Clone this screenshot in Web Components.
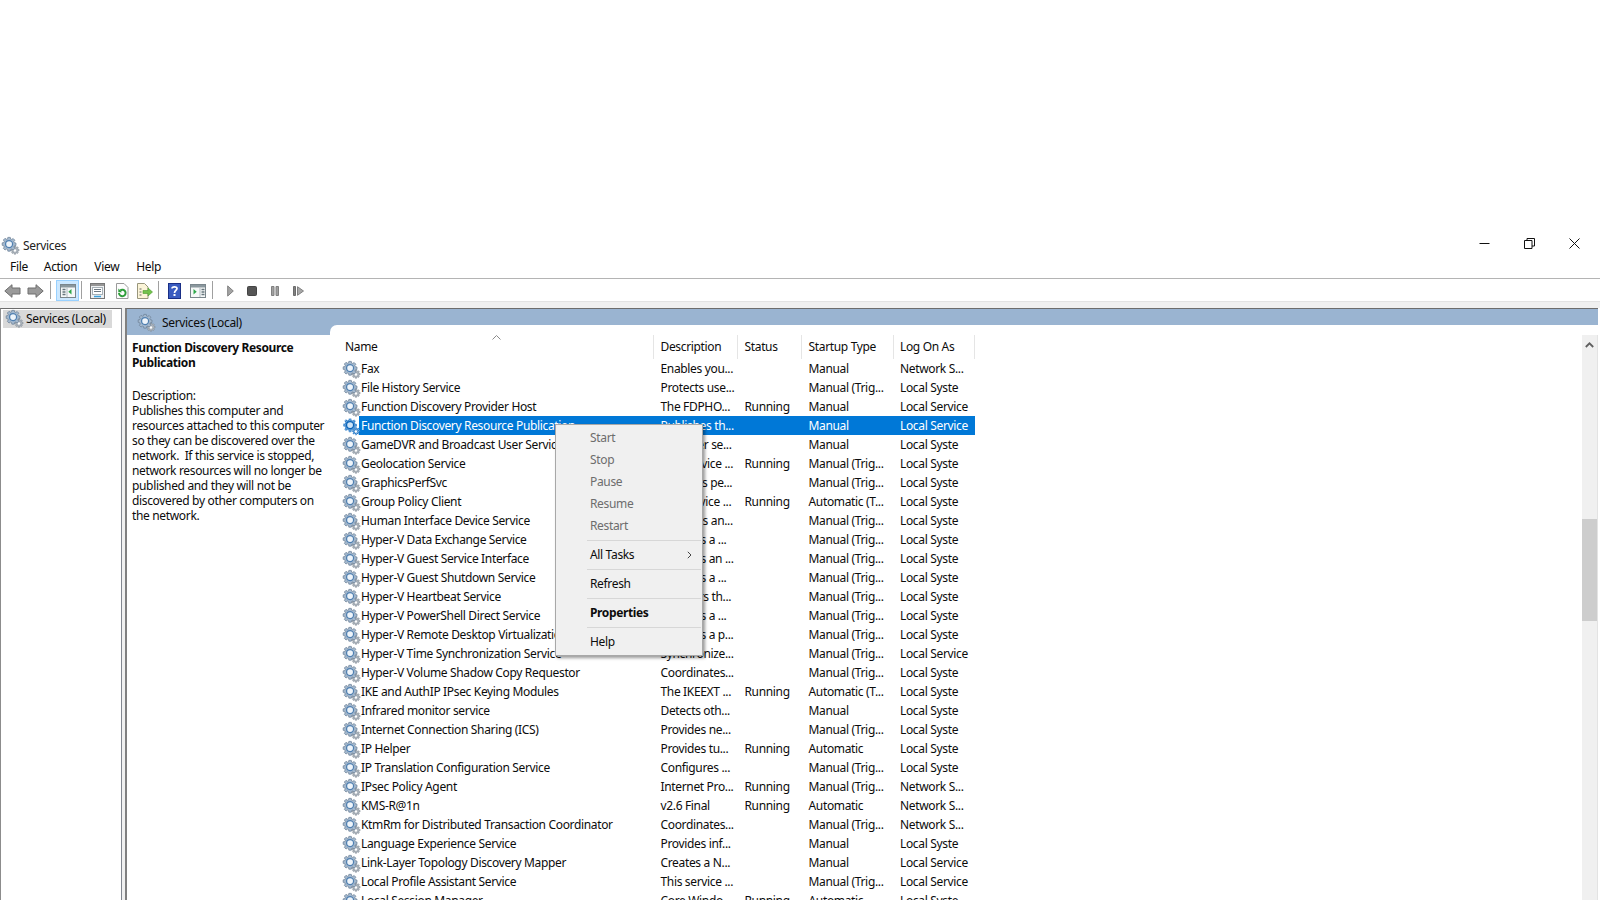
<!DOCTYPE html>
<html><head><meta charset="utf-8">
<style>
html,body{margin:0;padding:0;height:900px;overflow:hidden;background:#fff}
body{font:12px/15px "Noto Sans",sans-serif;color:#0c0c0c;letter-spacing:-.34px}
</style></head><body>
<svc-app></svc-app>
<script>
const GEAR=(sel)=>`<svg viewBox="0 0 18 18" width="17" height="17" aria-hidden="true">
<defs><pattern id="d" width="2" height="2" patternUnits="userSpaceOnUse"><rect width="2" height="2" fill="#0a63b8"/><rect width="1" height="1" fill="#9cc6ec"/><rect x="1" y="1" width="1" height="1" fill="#9cc6ec"/></pattern></defs>
<path d="M13 9.500h1.400l.2 1.100.8.300 1-.6.900.9-.6 1 .3.800 1.100.2v1.400l-1.100.2-.3.800.6 1-.9.900-1-.6-.8.300-.2 1.100H13l-.2-1.100-.8-.3-1 .600-.9-.9.600-1-.3-.8-1.100-.2v-1.400l1.100-.2.300-.8-.6-1 .9-.9 1 .6.800-.3z" fill="${sel?'url(#d)':'#aab2ba'}" stroke="${sel?'none':'#7a8590'}" stroke-width=".5"/>
<circle cx="13.700" cy="14.200" r="1.300" fill="#fff"/>
<path d="M6.200.4h2.600l.3 1.700 1.300.5 1.400-1 1.800 1.800-1 1.400.5 1.300 1.700.3v2.600l-1.700.3-.5 1.300 1 1.400-1.800 1.800-1.400-1-1.300.5-.3 1.700H6.200l-.3-1.700-1.300-.5-1.400 1-1.800-1.800 1-1.400-.5-1.300L.2 8.800V6.200l1.700-.3.500-1.300-1-1.400 1.800-1.800 1.400 1 1.300-.5z" fill="${sel?'url(#d)':'#a3b8ce'}" stroke="${sel?'none':'#6e8298'}" stroke-width=".8"/>
<circle cx="7.500" cy="7.500" r="3.700" fill="${sel?'#cfe4f7':'#eef4fa'}" stroke="${sel?'#0a63b8':'#4f7fb0'}" stroke-width="1.300"/>
</svg>`;
customElements.define('svc-gear',class extends HTMLElement{connectedCallback(){if(this.shadowRoot)return;const s=this.attachShadow({mode:'open'});s.innerHTML=`<style>:host{display:inline-flex;width:16px;height:16px;flex:none;position:relative;z-index:1}svg{display:block;overflow:visible;flex:none}</style>${GEAR(this.hasAttribute('sel'))}`}});

customElements.define('svc-titlebar',class extends HTMLElement{constructor(){super();this.attachShadow({mode:'open'}).innerHTML=`<style>
:host{display:flex;align-items:center;height:21px;padding:0 3px 1px 2px;box-sizing:border-box}
.t{margin-left:5px;color:#222}
.caps{margin-left:auto;display:flex;align-self:flex-start}
.c{width:45px;height:16px;display:flex;align-items:center;justify-content:center}
svg{display:block}
</style><svc-gear></svc-gear><span class="t">Services</span><span class="caps">
<span class="c"><svg width="11" height="11" viewBox="0 0 11 11"><path d="M.5 5.500h10" stroke="#111" fill="none"/></svg></span>
<span class="c"><svg width="11" height="11" viewBox="0 0 11 11"><path d="M.5 2.500h7.500v8H.5zM3 2.500V.5h7.500v7.500H8" stroke="#111" fill="none"/></svg></span>
<span class="c"><svg width="11" height="11" viewBox="0 0 11 11"><path d="M.5.5l10 10M10.500.5l-10 10" stroke="#111" fill="none"/></svg></span>
</span>`}});

customElements.define('svc-menubar',class extends HTMLElement{constructor(){super();this.attachShadow({mode:'open'}).innerHTML=`<style>
:host{display:flex;height:23px;align-items:center;border-bottom:1px solid #b4b4b4;padding:0 0 2px 10px;gap:15px;box-sizing:border-box;color:#0c0c0c}
</style><span>File</span><span style="margin-left:1px">Action</span><span style="margin-left:2px">View</span><span style="margin-left:2px">Help</span>`}});

const I={
back:`<svg width="17" height="14" viewBox="0 0 17 14"><path d="M8 .7L.8 7 8 13.300V10h8V4H8z" fill="#9a9a9a" stroke="#6e6e6e"/></svg>`,
fwd:`<svg width="17" height="14" viewBox="0 0 17 14"><path d="M9 .7L16.200 7 9 13.300V10H1V4h8z" fill="#9a9a9a" stroke="#6e6e6e"/></svg>`,
tree:`<svg width="16" height="14" viewBox="0 0 16 14"><rect x=".5" y=".5" width="15" height="13" fill="#f6f8f8" stroke="#7a868c"/><path d="M1 1h14v2.500H1z" fill="#8a979d"/><path d="M2.500 5.500h3M2.500 8h3M2.500 10.500h3" stroke="#66757c" stroke-width="1.300"/><path d="M7 4v9" stroke="#b0bcc2"/><path d="M11.500 5v5.500L8.300 7.800z" fill="#2fa84a"/></svg>`,
doc:`<svg width="15" height="16" viewBox="0 0 15 16"><rect x=".5" y=".5" width="14" height="15" fill="#eef0f2" stroke="#777"/><path d="M1 1h13v2H1z" fill="#969696"/><rect x="2.500" y="4.500" width="10" height="7" fill="#fff" stroke="#a6b0b6"/><path d="M4 6.500h7M4 8.500h7" stroke="#6a7680"/><path d="M4 13.500h7" stroke="#39a0dc" stroke-width="1.500"/></svg>`,
refresh:`<svg width="14" height="16" viewBox="0 0 14 16"><path d="M1.500.5h7.500l4 4v11H1.500z" fill="#fdfdfd" stroke="#9a9a9a"/><path d="M4 10a3.300 3.300 0 1 0 1.200-2.600" fill="none" stroke="#2e9e3a" stroke-width="2"/><path d="M3.300 5.500v3.800h3.800z" fill="#2e9e3a"/></svg>`,
export:`<svg width="17" height="16" viewBox="0 0 17 16"><path d="M1.500.5h7l3.500 3.500v11.500H1.500z" fill="#fbf4d8" stroke="#99967c"/><path d="M3.500 6h2M3.500 9h2M3.500 12h2" stroke="#666" stroke-width="1.200"/><path d="M7 7.500h5V5l4.500 4-4.500 4v-2.500H7z" fill="#72c24c" stroke="#4c9a2e" stroke-width=".6"/></svg>`,
help:`<svg width="13" height="16" viewBox="0 0 13 16"><rect width="13" height="16" fill="#3a5cc0"/><rect x=".5" y=".5" width="12" height="15" fill="none" stroke="#1a2f86"/><path d="M4 5.500C4 3.500 9 3 9 5.500c0 2-2.500 2-2.500 4.500" fill="none" stroke="#fff" stroke-width="1.700"/><rect x="5.500" y="11" width="2" height="2" fill="#fff"/></svg>`,
props:`<svg width="16" height="14" viewBox="0 0 16 14"><rect x=".5" y=".5" width="15" height="13" fill="#f6f8f8" stroke="#7a868c"/><path d="M1 1h14v2.500H1z" fill="#8a979d"/><path d="M10 4v9" stroke="#b0bcc2"/><path d="M11.500 5.500h3M11.500 8h3M11.500 10.500h3" stroke="#66757c" stroke-width="1.300"/><path d="M3.500 5v5.500l3.200-2.700z" fill="#2fa84a"/></svg>`,
play:`<svg width="7" height="12" viewBox="0 0 7 12"><path d="M.7.900v10.200L6.300 6z" fill="#a4a4a4" stroke="#808080"/></svg>`,
stop:`<svg width="10" height="10" viewBox="0 0 10 10"><rect x=".5" y=".5" width="9" height="9" rx="1" fill="#555" stroke="#444"/></svg>`,
pause:`<svg width="8" height="10" viewBox="0 0 8 10"><path d="M.5.500h2.500v9H.5zM5 .500h2.500v9H5z" fill="#a0a0a0" stroke="#808080"/></svg>`,
resume:`<svg width="11" height="10" viewBox="0 0 11 10"><path d="M.5.500h2v9h-2z" fill="#808080" stroke="#6c6c6c"/><path d="M4.500.7v8.600L10.500 5z" fill="#a8a8a8" stroke="#808080"/></svg>`};
customElements.define('svc-toolbar',class extends HTMLElement{constructor(){super();
const b=(k,w,x='')=>`<span class="b ${x}" style="width:${w}px">${I[k]}</span>`;const sep=(l,r)=>`<span class="s" style="margin:0 ${r}px 0 ${l}px"></span>`;
this.attachShadow({mode:'open'}).innerHTML=`<style>
:host{display:flex;align-items:flex-end;height:22px;padding-left:3px}
.b{display:flex;align-items:center;justify-content:center;height:22px;padding-top:2px;box-sizing:border-box;flex:none}
.on{background:#cce8ff;border:1px solid #99d1ff;height:21px;padding-top:1px}
.s{width:1px;height:18px;background:#a0a0a0;flex:none;align-self:center}
svg{display:block}
</style>${b('back',19)}<span style="width:3px"></span>${b('fwd',20)}${sep(5,5)}${b('tree',23,'on')}${sep(2,3)}${b('doc',25)}${b('refresh',23)}${b('export',22)}${sep(3,4)}${b('help',23)}${b('props',24)}${sep(2,6)}${b('play',22)}${b('stop',22)}${b('pause',24)}${b('resume',23)}`}});

customElements.define('svc-tree',class extends HTMLElement{constructor(){super();this.attachShadow({mode:'open'}).innerHTML=`<style>
:host{display:block;width:122px;box-sizing:border-box;background:#fff;border:1px solid #828790;border-width:1px 1px 0 1px;border-top-color:#6d6d6d;border-left-color:#8c8c8c;padding:1px 9px 0 2px;flex:none}
.i{display:flex;align-items:center;background:#d9d9d9;height:18px;gap:4px;padding:0 0 2px 3px;box-sizing:border-box;white-space:nowrap}
</style><div class="i"><svc-gear></svc-gear><span>Services (Local)</span></div>`}});

customElements.define('svc-details',class extends HTMLElement{constructor(){super();this.attachShadow({mode:'open'}).innerHTML=`<style>
:host{display:block;width:203px;box-sizing:border-box;padding:5px 4px 0 5px;flex:none;background:#fff}
h2{font:inherit;font-weight:700;margin:0 0 17.500px;letter-spacing:-.38px}
p{margin:0;white-space:pre}
</style><h2>Function Discovery Resource Publication</h2><p>Description:
Publishes this computer and
resources attached to this computer
so they can be discovered over the
network.  If this service is stopped,
network resources will no longer be
published and they will not be
discovered by other computers on
the network.</p>`}});

customElements.define('svc-row',class extends HTMLElement{constructor(){super();this.attachShadow({mode:'open'}).innerHTML=`<style>
:host{display:grid;grid-template-columns:16px 295px 84px 64px 91.500px 81px;width:631.500px;height:19px;align-items:center;white-space:nowrap}
.cell{height:19px;line-height:19px;overflow:hidden;padding-left:6.500px;box-sizing:border-box}
.n{padding-left:2px}
:host([sel]) .cell{background:#0078d7;color:#fff}
</style><svc-gear></svc-gear><span class="cell n"></span><span class="cell d"></span><span class="cell s"></span><span class="cell u"></span><span class="cell l"></span>`}
set data(v){const r=this.shadowRoot;['n','d','s','u','l'].forEach((k,i)=>{r.querySelector('.'+k).textContent=v[i]||''});
if(v.sel){this.setAttribute('sel','');r.querySelector('svc-gear').setAttribute('sel','')}}});

const rows=[
['Fax','Enables you...','','Manual','Network S...'],
['File History Service','Protects use...','','Manual (Trig...','Local Syste'],
['Function Discovery Provider Host','The FDPHO...','Running','Manual','Local Service'],
['Function Discovery Resource Publication','Publishes th...','','Manual','Local Service'],
['GameDVR and Broadcast User Service','This user se...','','Manual','Local Syste'],
['Geolocation Service','This service ...','Running','Manual (Trig...','Local Syste'],
['GraphicsPerfSvc','Graphics pe...','','Manual (Trig...','Local Syste'],
['Group Policy Client','The service ...','Running','Automatic (T...','Local Syste'],
['Human Interface Device Service','Activates an...','','Manual (Trig...','Local Syste'],
['Hyper-V Data Exchange Service','Provides a ...','','Manual (Trig...','Local Syste'],
['Hyper-V Guest Service Interface','Provides an ...','','Manual (Trig...','Local Syste'],
['Hyper-V Guest Shutdown Service','Provides a ...','','Manual (Trig...','Local Syste'],
['Hyper-V Heartbeat Service','Monitors th...','','Manual (Trig...','Local Syste'],
['Hyper-V PowerShell Direct Service','Provides a ...','','Manual (Trig...','Local Syste'],
['Hyper-V Remote Desktop Virtualization Service','Provides a p...','','Manual (Trig...','Local Syste'],
['Hyper-V Time Synchronization Service','Synchronize...','','Manual (Trig...','Local Service'],
['Hyper-V Volume Shadow Copy Requestor','Coordinates...','','Manual (Trig...','Local Syste'],
['IKE and AuthIP IPsec Keying Modules','The IKEEXT ...','Running','Automatic (T...','Local Syste'],
['Infrared monitor service','Detects oth...','','Manual','Local Syste'],
['Internet Connection Sharing (ICS)','Provides ne...','','Manual (Trig...','Local Syste'],
['IP Helper','Provides tu...','Running','Automatic','Local Syste'],
['IP Translation Configuration Service','Configures ...','','Manual (Trig...','Local Syste'],
['IPsec Policy Agent','Internet Pro...','Running','Manual (Trig...','Network S...'],
['KMS-R@1n','v2.6 Final','Running','Automatic','Network S...'],
['KtmRm for Distributed Transaction Coordinator','Coordinates...','','Manual (Trig...','Network S...'],
['Language Experience Service','Provides inf...','','Manual','Local Syste'],
['Link-Layer Topology Discovery Mapper','Creates a N...','','Manual','Local Service'],
['Local Profile Assistant Service','This service ...','','Manual (Trig...','Local Service'],
['Local Session Manager','Core Windo...','Running','Automatic','Local Syste']];
rows[3].sel=true;

customElements.define('svc-list',class extends HTMLElement{constructor(){super();this.attachShadow({mode:'open'}).innerHTML=`<style>
:host{display:block;flex:1;min-width:0;padding-left:13px;overflow:hidden}
.head{display:grid;grid-template-columns:311px 84px 64px 91.500px 81px;height:24px;position:relative;white-space:nowrap;width:631.500px}
.head span{padding-left:6.500px;height:24px;line-height:24px;border-right:1px solid #e5e5e5;box-sizing:border-box;display:block}
.head span:first-child{padding-left:2px}
.caret{position:absolute;left:149px;top:0}
</style><div class="head"><span>Name</span><span>Description</span><span>Status</span><span>Startup Type</span><span>Log On As</span>
<svg class="caret" width="9" height="5" viewBox="0 0 9 5"><path d="M.5 4.500l4-4 4 4" fill="none" stroke="#8a8a8a"/></svg></div><div id="b"></div>`;
const b=this.shadowRoot.getElementById('b');rows.forEach(r=>{const e=document.createElement('svc-row');e.data=r;b.append(e)})}});

customElements.define('svc-scrollbar',class extends HTMLElement{constructor(){super();this.attachShadow({mode:'open'}).innerHTML=`<style>
:host{display:block;width:15px;background:#f0f0f0;flex:none;position:relative;border-right:1px solid #e3e3e3}
.up{display:flex;justify-content:center;padding-top:7px}
.th{position:absolute;left:0;right:0;top:184px;height:102px;background:#cdcdcd}
svg{display:block}
</style><div class="up"><svg width="9" height="6" viewBox="0 0 9 6"><path d="M.8 5L4.500 1.300 8.200 5" fill="none" stroke="#606060" stroke-width="1.800"/></svg></div><div class="th"></div>`}});

customElements.define('svc-menu',class extends HTMLElement{constructor(){super();
const it=(t,c='')=>`<div class="m ${c}">${t}</div>`;
this.attachShadow({mode:'open'}).innerHTML=`<style>
:host{position:absolute;left:555px;top:424px;width:148px;box-sizing:border-box;background:#f0f0f0;border:1px solid #a8a8a8;box-shadow:2px 2px 3px rgba(0,0,0,.4);padding:2px 1px;color:#0c0c0c;display:block;z-index:5}
.m{height:22px;line-height:22px;padding-left:33px;position:relative;background:#f0f0f0}
.dis{color:#6d6d6d}
.b{font-weight:700;letter-spacing:-.38px}
.h{height:7px;margin:0 0 0 30px;position:relative}
.h:after{content:"";position:absolute;left:0;right:0;top:3px;height:1px;background:#d7d7d7}
svg{position:absolute;right:9px;top:7px}
</style>${it('Start','dis')}${it('Stop','dis')}${it('Pause','dis')}${it('Resume','dis')}${it('Restart','dis')}<div class="h"></div><div class="m">All Tasks<svg width="5" height="8" viewBox="0 0 5 8"><path d="M.8.800L4 4 .8 7.200" fill="none" stroke="#444"/></svg></div><div class="h"></div>${it('Refresh')}<div class="h"></div>${it('Properties','b')}<div class="h"></div>${it('Help')}`}});

customElements.define('svc-app',class extends HTMLElement{constructor(){super();this.attachShadow({mode:'open'}).innerHTML=`<style>
:host{display:flex;flex-direction:column;height:900px;overflow:hidden;position:relative}
.top{height:235px;flex:none}
.band{height:7px;background:#f0f0f0;flex:none;border-top:1px solid #e3e3e3;box-sizing:border-box}
.main{flex:1;display:flex;min-height:0;background:#fff}
.split{width:3px;flex:none;background:#f0f0f0}
.pane{flex:1;min-width:0;border-left:2px solid #808080;border-top:1px solid #6d6d6d;display:flex;flex-direction:column;background:#fff;margin-right:2px}
.cap{height:26px;flex:none;display:flex;background:#9ab4d1}
.tab{width:203px;box-sizing:border-box;flex:none;display:flex;align-items:center;padding-left:11px;gap:8px}
.rest{flex:1;margin-top:16px;background:#fff;border-top-left-radius:7px}
.body{flex:1;display:flex;min-height:0}
.rt{flex:1;min-width:0;display:flex}
</style><div class="top"></div><svc-titlebar></svc-titlebar><svc-menubar></svc-menubar><svc-toolbar></svc-toolbar><div class="band"></div>
<div class="main"><svc-tree></svc-tree><div class="split"></div><div class="pane"><div class="cap"><div class="tab"><svc-gear></svc-gear><span>Services (Local)</span></div><div class="rest"></div></div>
<div class="body"><svc-details></svc-details><div class="rt"><svc-list></svc-list><svc-scrollbar></svc-scrollbar></div></div></div></div>
<svc-menu></svc-menu>`}});
</script></body></html>
